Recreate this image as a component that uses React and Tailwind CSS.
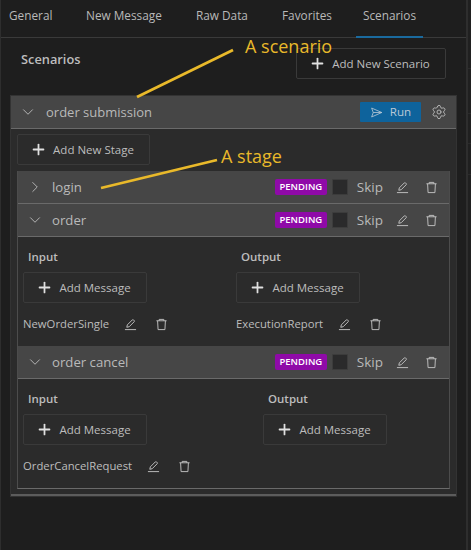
import React from "react";
import { ChevronDown, ChevronRight, Plus, Settings } from "lucide-react";

const SendIcon = ({ className }) => (
  <svg viewBox="0 0 16 16" className={className} fill="none" stroke="currentColor" strokeWidth="1" strokeLinejoin="round">
    <path d="M2 2.5 14.5 8 2 13.5 4 8Z" />
    <path d="M4 8h10.5" />
  </svg>
);

const EditIcon = () => (
  <svg viewBox="0 0 14 14" className="w-[13px] h-[13px] text-[#c4c4c4]" fill="none" stroke="currentColor" strokeWidth="1" strokeLinejoin="round">
    <path d="M3 10 3.6 7.4 8.9 2.1a1 1 0 0 1 1.4 0l.6.6a1 1 0 0 1 0 1.4L5.6 9.4Z" />
    <path d="M1 12.5h12" />
  </svg>
);

const TrashIcon = () => (
  <svg viewBox="0 0 14 14" className="w-[13px] h-[13px] text-[#c4c4c4]" fill="none" stroke="currentColor" strokeWidth="1" strokeLinejoin="round">
    <path d="M1.5 3h11" />
    <path d="M4.5 3V1.5h5V3" />
    <path d="M2.8 3l.5 9.5h7.4l.5-9.5" />
  </svg>
);

const OutlineButton = ({ label, className }) => (
  <button className={`flex items-center justify-center gap-[6px] pr-[3px] h-[31px] border border-[#3a3a3a] rounded-[2px] text-[11.5px] text-[#bdbdbd] ${className}`}>
    <Plus size={17} strokeWidth={2.5} className="text-[#e0e0e0]" />
    {label}
  </button>
);

const StageHeader = ({ name, open }) => (
  <div className="flex items-center h-[33px] bg-[#464646] border-b border-[#6a6a6a] pl-[8px] pr-[11px] text-[#b9b9b9]">
    {open ? <ChevronDown size={18} strokeWidth={1.25} /> : <ChevronRight size={18} strokeWidth={1.25} />}
    <span className="ml-[8px] pt-[2px] text-[13.2px] flex-1">{name}</span>
    <span className="bg-[#8f0aa8] text-white text-[9.5px] font-semibold rounded-[2px] h-[16px] w-[52px] flex items-center justify-center">PENDING</span>
    <span className="ml-[5px] w-[16px] h-[16px] bg-[#2a2a2b] border border-[#3c3c3c] rounded-[1px]" />
    <span className="ml-[9px] pt-[1px] text-[13.5px]">Skip</span>
    <span className="ml-[13px] flex"><EditIcon /></span>
    <span className="ml-[16px] flex"><TrashIcon /></span>
  </div>
);

const MessageItem = ({ name }) => (
  <div className="flex items-center h-[20px] mt-[11px] text-[11.3px] text-[#bdbdbd]">
    <span>{name}</span>
    <span className="ml-[15px] flex"><EditIcon /></span>
    <span className="ml-[18px] flex"><TrashIcon /></span>
  </div>
);

const MessageColumn = ({ title, items, className }) => (
  <div className={className}>
    <div className="pl-[5px] text-[11.5px] font-semibold text-[#bdbdbd] h-[18px] leading-[18px]">{title}</div>
    <OutlineButton label="Add Message" className="w-[124px] mt-[6px]" />
    {items.map((name) => (
      <MessageItem key={name} name={name} />
    ))}
  </div>
);

const Stage = ({ name, open, input, output, leftWidth, bodyHeight }) => (
  <div>
    <StageHeader name={name} open={open} />
    {open && (
      <div className={`flex pl-[5px] pt-[11px] bg-[#2b2b2b] ${bodyHeight}`}>
        <MessageColumn title="Input" items={input} className={leftWidth} />
        <MessageColumn title="Output" items={output} />
      </div>
    )}
  </div>
);

const tabs = ["General", "New Message", "Raw Data", "Favorites", "Scenarios"];
const tabClasses = ["ml-[9px] w-[77px]", "w-[110px]", "w-[86px]", "w-[74px]", "w-[67px] text-center"];

export default function App() {
  return (
    <div className="relative w-[471px] h-[550px] overflow-hidden bg-[#1e1e1e] font-['Open_Sans','Noto_Sans',sans-serif] border-l border-[#2e2e2e]">
      <div className="-ml-[1px] flex h-[38px] border-b border-[#3a3a3a] text-[11.8px] text-[#b9b9b9] w-[466px]">
        {tabs.map((tab, i) => (
          <div key={tab} className={`relative pt-[7px] ${tabClasses[i]}`}>
            {tab}
            {tab === "Scenarios" && <div className="absolute left-0 right-0 bottom-[-1px] h-[2px] bg-[#1a6a9e]" />}
          </div>
        ))}
      </div>

      <div className="-ml-[1px] flex justify-between pl-[21px] pr-[25px] pt-[10px] h-[58px] w-[471px]">
        <span className="text-[12.8px] font-semibold text-[#bdbdbd] mt-[2px]">Scenarios</span>
        <OutlineButton label="Add New Scenario" className="w-[150px]" />
      </div>

      <div className="ml-[10px] w-[445px] h-[400px] bg-[#2b2b2b] border-b-2 border-[#5c5c5c] px-[6px] shadow-[0_0_0_1px_#333]">
        <div className="-mx-[6px] flex items-center h-[33px] bg-[#464646] border-b border-[#6a6a6a] pl-[8px] pr-[9px] text-[#b9b9b9]">
          <ChevronDown size={18} strokeWidth={1.25} />
          <span className="ml-[9px] pt-[2px] text-[13px] flex-1">order submission</span>
          <span className="flex items-center justify-center gap-[7px] w-[61px] h-[20px] bg-[#0e639c] text-[11.6px] text-[#b9c9d6] rounded-[1px]">
            <SendIcon className="w-[13px] h-[13px]" />
            Run
          </span>
          <Settings size={16} strokeWidth={1.25} className="ml-[10px] text-[#c4c4c4]" />
        </div>
        <OutlineButton label="Add New Stage" className="w-[133px] mt-[5px] mb-[6px]" />
        <div className="border-b border-x border-[#4c4c4c] border-b-[#6a6a6a]">
          <Stage name="login" />
          <Stage name="order" open input={["NewOrderSingle"]} output={["ExecutionReport"]} leftWidth="w-[213px]" bodyHeight="h-[109px]" />
          <Stage name="order cancel" open input={["OrderCancelRequest"]} output={[]} leftWidth="w-[240px]" bodyHeight="h-[109px]" />
        </div>
      </div>

      {/* right edge of the window behind the panel */}
      <div className="absolute top-0 bottom-0 left-[465px] right-0 border-l-2 border-[#2e2e2e] bg-[#202020]">
        <div className="mt-[68px] h-[46px] border-y border-[#2b2b2b]" />
        <div className="mt-[29px] h-[32px] border-y border-[#2b2b2b]" />
      </div>

      <svg className="absolute -left-[1px] top-0 pointer-events-none" width="471" height="550" fill="none" stroke="#e9b92a" strokeWidth="2.8">
        <path d="M137 97 233 50" />
        <path d="M101 188 217 160" />
      </svg>
      <span className="absolute left-[244px] top-[33px] text-[18px] leading-[26px] text-[#e9b92a]">A scenario</span>
      <span className="absolute left-[220px] top-[143px] text-[18px] leading-[26px] text-[#e9b92a]">A stage</span>
    </div>
  );
}
